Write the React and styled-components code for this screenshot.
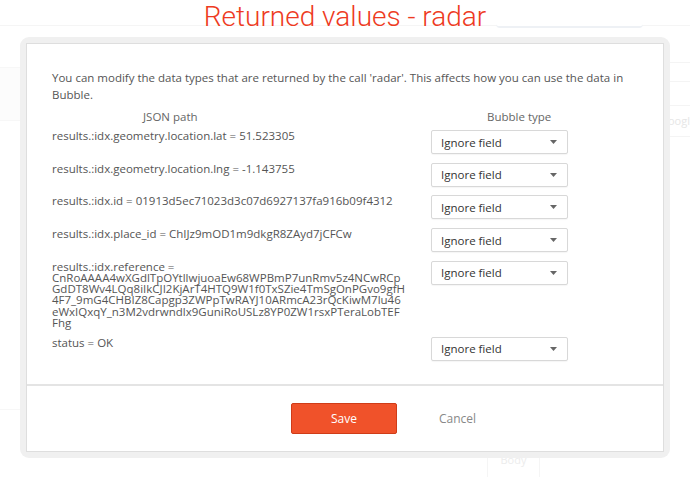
import React from 'react';
import styled, { createGlobalStyle } from 'styled-components';

const Global = createGlobalStyle`
  html, body { margin: 0; padding: 0; background: #ffffff; }
  body {
    width: 690px; height: 477px; overflow: hidden;
    font-family: "Open Sans", "Liberation Sans", sans-serif;
  }
  #root { width: 690px; height: 477px; }
`;

const Page = styled.div`
  position: relative;
  width: 690px;
  height: 477px;
  overflow: hidden;
  background: #fff;
`;

/* ---------- faint page behind the modal ---------- */
const Backdrop = styled.div`
  display: grid;
  grid-template-rows: 26px 1fr;
  height: 100%;
`;

const TopBar = styled.div`
  display: flex;
  justify-content: flex-end;
  padding-right: 47px;
  border-bottom: 1px solid #f5f5f5;
`;

const SearchBox = styled.div`
  width: 147px;
  height: 28px;
  box-sizing: border-box;
  border-bottom: 2px solid #eef1f5;
  border-radius: 0 0 4px 4px;
  background: #fff;
`;

const BackBody = styled.div`
  display: grid;
  grid-template-columns: 20px 1fr 40px;
`;

const LeftStrip = styled.div`
  display: flex;
  flex-direction: column;
  padding-top: 41px;
`;

const StripCell = styled.div`
  height: ${p => p.$h}px;
  border-top: 1px solid #f7f7f7;
  background: ${p => (p.$shade ? '#fcfcfc' : 'transparent')};
`;

const MidArea = styled.div`
  display: flex;
  flex-direction: column;
  justify-content: flex-end;
  padding-left: 467px;
`;

const BodyTab = styled.div`
  width: 53px;
  height: 22px;
  box-sizing: border-box;
  border-left: 1px solid #f5f5f5;
  border-right: 1px solid #f5f5f5;
  color: #ececec;
  font-size: 11px;
  line-height: 10px;
  text-align: center;
`;

const RightStrip = styled.div`
  display: flex;
  flex-direction: column;
  padding-top: 36px;
`;

const RightCell = styled.div`
  height: ${p => p.$h}px;
  border-top: 1px solid #f4f4f4;
  color: #e6e6e6;
  font-size: 11px;
  line-height: ${p => p.$h}px;
  padding-left: 10px;
  white-space: nowrap;
  overflow: hidden;
`;

/* ---------- modal ---------- */
const Overlay = styled.div`
  position: absolute;
  inset: 0;
  display: flex;
  flex-direction: column;
  align-items: center;
`;

const Title = styled.h1`
  margin: 0;
  font-family: Roboto, "Open Sans", sans-serif;
  font-weight: 300;
  font-size: 28px;
  line-height: 33px;
  color: #ee3a22;
`;

const Frame = styled.div`
  margin-top: 4px;
  width: 650px;
  box-sizing: border-box;
  padding: 6px;
  background: #f0f0f0;
  border-radius: 9px;
`;

const Panel = styled.div`
  background: #fff;
  border: 1px solid #dedede;
`;

const Content = styled.div`
  padding: 24.5px 25px 15px 25px;
`;

const Description = styled.p`
  margin: 0;
  font-size: 11.5px;
  line-height: 17px;
  color: #555;
`;

const Grid = styled.div`
  display: grid;
  grid-template-columns: 379px 137px;
`;

const HeaderRow = styled(Grid)`
  margin: 5px 0 5.5px;
  font-size: 11.5px;
  line-height: 17px;
  color: #666;
`;

const HeaderCell = styled.div`
  padding-left: ${p => p.$pad}px;
`;

const Row = styled(Grid)`
  margin-bottom: 8.7px;
  align-items: start;
`;

const PathText = styled.div`
  font-size: 11.5px;
  line-height: 11.2px;
  color: #555;
  padding-right: 20px;
`;

const Line = styled.span`
  display: block;
  white-space: nowrap;
`;

const Select = styled.div`
  height: 24px;
  box-sizing: border-box;
  border: 1px solid #d8d8d8;
  border-radius: 2px;
  display: flex;
  align-items: center;
  justify-content: space-between;
  padding: 0 10px 0 9px;
  font-size: 11.5px;
  color: #333;
  box-shadow: 0 1px 1px rgba(0, 0, 0, 0.04);
  background: #fff;
`;

const Footer = styled.div`
  height: 65px;
  border-top: 2px solid #e4e4e4;
  display: grid;
  grid-template-columns: 1fr auto 1fr;
  align-items: center;
`;

const SaveButton = styled.button`
  grid-column: 2;
  width: 106px;
  height: 31px;
  margin-right: 2px;
  background: #f0522a;
  border: 1px solid #cf3c18;
  border-radius: 2px;
  color: #fff;
  font-family: "Open Sans", sans-serif;
  font-size: 12px;
  cursor: pointer;
`;

const CancelLink = styled.span`
  padding-left: 40px;
  font-size: 12px;
  color: #888;
  margin-top: -1px;
`;

const Caret = () => (
  <svg width="7" height="4" viewBox="0 0 7 4">
    <path d="M0 0 L7 0 L3.5 4 Z" fill="#666" />
  </svg>
);

const rows = [
  { lines: ['results.:idx.geometry.location.lat = 51.523305'] },
  { lines: ['results.:idx.geometry.location.lng = -1.143755'] },
  { lines: ['results.:idx.id = 01913d5ec71023d3c07d6927137fa916b09f4312'] },
  { lines: ['results.:idx.place_id = ChIJz9mOD1m9dkgR8ZAyd7jCFCw'] },
  {
    lines: [
      'results.:idx.reference =',
      'CnRoAAAA4wXGdlTpOYtllwjuoaEw68WPBmP7unRmv5z4NCwRCp',
      'GdDT8Wv4LQq8iIkCJI2KjArT4HTQ9W1f0TxSZie4TmSgOnPGvo9gfH',
      '4F7_9mG4CHBIZ8Capgp3ZWPpTwRAYJ10ARmcA23rQcKiwM7lu46',
      'eWxIQxqY_n3M2vdrwndlx9GuniRoUSLz8YP0ZW1rsxPTeraLobTEF',
      'Fhg',
    ],
  },
  { lines: ['status = OK'] },
];

export default function App() {
  return (
    <Page>
      <Global />
      <Backdrop>
        <TopBar>
          <SearchBox />
        </TopBar>
        <BackBody>
          <LeftStrip>
            <StripCell $h={52} $shade />
            <StripCell $h={288} />
            <StripCell $h={41} />
          </LeftStrip>
          <MidArea>
            <BodyTab>Body</BodyTab>
          </MidArea>
          <RightStrip>
            <RightCell $h={18} />
            <RightCell $h={23} />
            <RightCell $h={30}>Googl</RightCell>
            <RightCell $h={30} />
          </RightStrip>
        </BackBody>
      </Backdrop>

      <Overlay>
        <Title>Returned values - radar</Title>
        <Frame>
          <Panel>
            <Content>
              <Description>
                You can modify the data types that are returned by the call 'radar'. This affects how you can use the data in Bubble.
              </Description>
              <HeaderRow>
                <HeaderCell $pad={91}>JSON path</HeaderCell>
                <HeaderCell $pad={56}>Bubble type</HeaderCell>
              </HeaderRow>
              {rows.map((r, i) => (
                <Row key={i}>
                  <PathText>
                    {r.lines.map((l, j) => (
                      <Line key={j}>{l}</Line>
                    ))}
                  </PathText>
                  <Select>
                    <span>Ignore field</span>
                    <Caret />
                  </Select>
                </Row>
              ))}
            </Content>
            <Footer>
              <SaveButton>Save</SaveButton>
              <CancelLink>Cancel</CancelLink>
            </Footer>
          </Panel>
        </Frame>
      </Overlay>
    </Page>
  );
}
